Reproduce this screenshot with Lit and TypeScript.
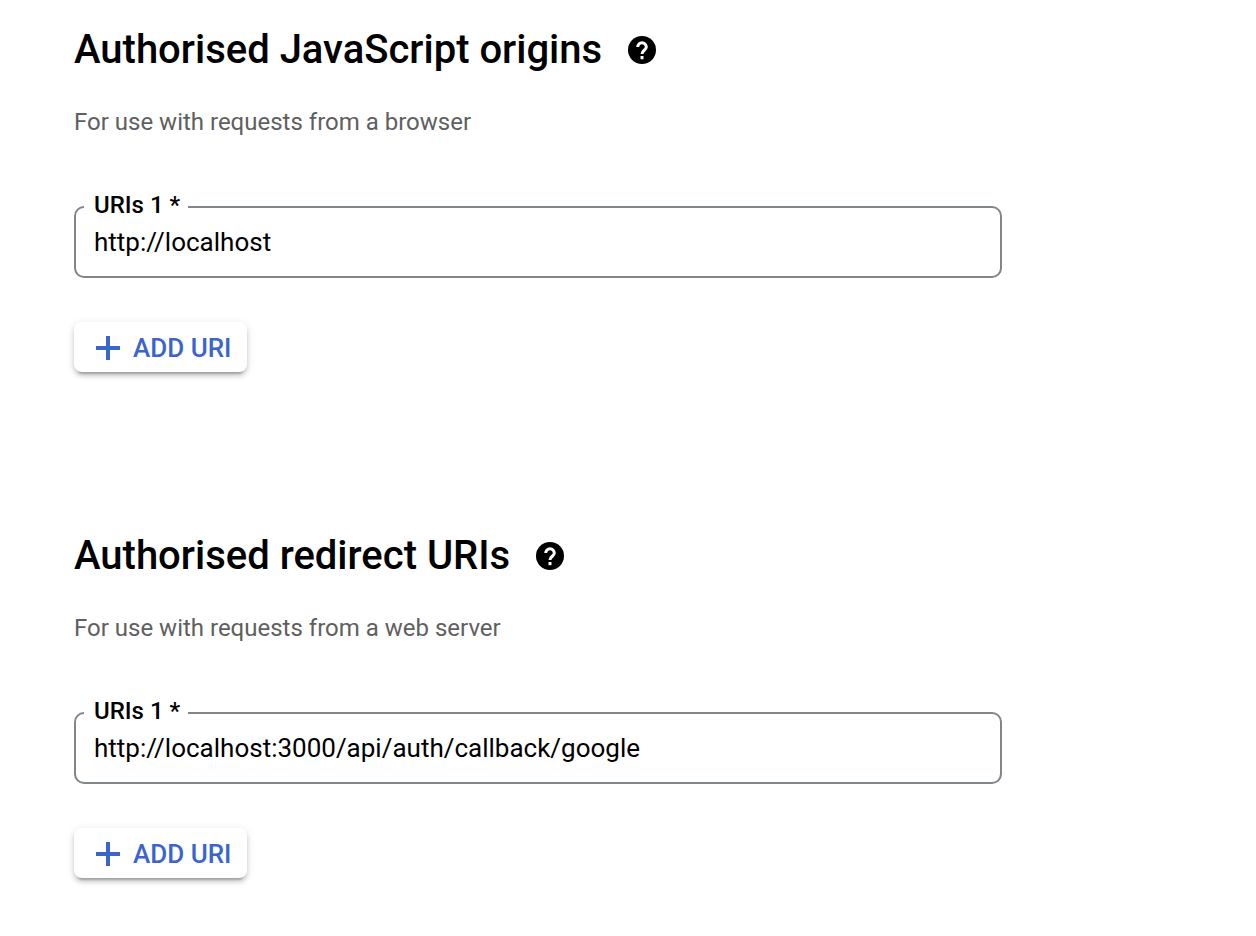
import { LitElement, html, css } from "lit";
import { customElement, property } from "lit/decorators.js";

@customElement("uri-section")
class UriSection extends LitElement {
  @property() heading = "";
  @property() hint = "";
  @property() value = "";

  static styles = css`
    :host {
      display: block;
    }
    .title {
      display: flex;
      align-items: center;
      gap: 26px;
    }
    h2 {
      margin: 0;
      font-size: 40px;
      line-height: 48px;
      font-weight: 500;
      color: #000;
    }
    .help {
      display: flex;
      padding: 0;
      border: 0;
      background: none;
      color: #000;
    }
    .help svg {
      width: 28px;
      height: 28px;
    }
    .hint {
      margin: 32px 0 55px;
      font-size: 24px;
      line-height: 32px;
      color: #5f5f5f;
    }
    .field {
      margin: 0;
      padding: 0 8px;
      min-width: 0;
      border: 2px solid #80868b;
      border-radius: 10px;
    }
    .field legend {
      padding: 0 8px 4px 10px;
      font-size: 24px;
      line-height: 24px;
      font-weight: 500;
      color: #000;
    }
    .field input {
      display: block;
      box-sizing: border-box;
      width: 100%;
      height: 42px;
      margin-bottom: 13px;
      padding: 0 10px;
      border: 0;
      outline: 0;
      background: none;
      font: inherit;
      font-size: 26px;
      color: #000;
    }
    .add {
      display: flex;
      align-items: center;
      gap: 13px;
      height: 50px;
      margin-top: 44px;
      padding: 2px 16px 0 22px;
      border: 0;
      border-radius: 8px;
      background: #fff;
      box-shadow: 0 6px 2px -4px rgba(0, 0, 0, 0.2), 0 4px 4px rgba(0, 0, 0, 0.14), 0 2px 10px rgba(0, 0, 0, 0.12);
      font: inherit;
      font-size: 26px;
      font-weight: 500;
      color: #3b64cf;
    }
    .add svg {
      width: 24px;
      height: 24px;
    }
  `;

  render() {
    return html`
      <div class="title">
        <h2>${this.heading}</h2>
        <button class="help" type="button" aria-label="Help">
          <svg viewBox="0 0 28 28" aria-hidden="true">
            <circle cx="14" cy="14" r="14" fill="currentColor" />
            <path d="M9.7 11a4.300 4.300 0 1 1 8.600 0c0 3.200-4.300 3.400-4.300 7" fill="none" stroke="#fff" stroke-width="3" />
            <rect x="12.500" y="20" width="3" height="3.200" fill="#fff" />
          </svg>
        </button>
      </div>
      <p class="hint">${this.hint}</p>
      <fieldset class="field">
        <legend><label for="uri">URIs 1 *</label></legend>
        <input id="uri" type="text" .value=${this.value} required spellcheck="false" />
      </fieldset>
      <button class="add" type="button">
        <svg viewBox="0 0 24 24" fill="currentColor" aria-hidden="true">
          <path d="M10 0h4v10h10v4H14v10h-4V14H0v-4h10z" />
        </svg>
        <span>ADD URI</span>
      </button>
    `;
  }
}

@customElement("app-root")
class AppRoot extends LitElement {
  static styles = css`
    :host {
      display: block;
      min-height: 100vh;
      box-sizing: border-box;
      background: #fff;
      font-family: Roboto, "Liberation Sans", sans-serif;
    }
    main {
      display: flex;
      flex-direction: column;
      gap: 160px;
      max-width: 928px;
      padding: 26px 74px 48px;
    }
  `;

  render() {
    return html`
      <main>
        <uri-section
          heading="Authorised JavaScript origins"
          hint="For use with requests from a browser"
          value="http://localhost"
        ></uri-section>
        <uri-section
          heading="Authorised redirect URIs"
          hint="For use with requests from a web server"
          value="http://localhost:3000/api/auth/callback/google"
        ></uri-section>
      </main>
    `;
  }
}
